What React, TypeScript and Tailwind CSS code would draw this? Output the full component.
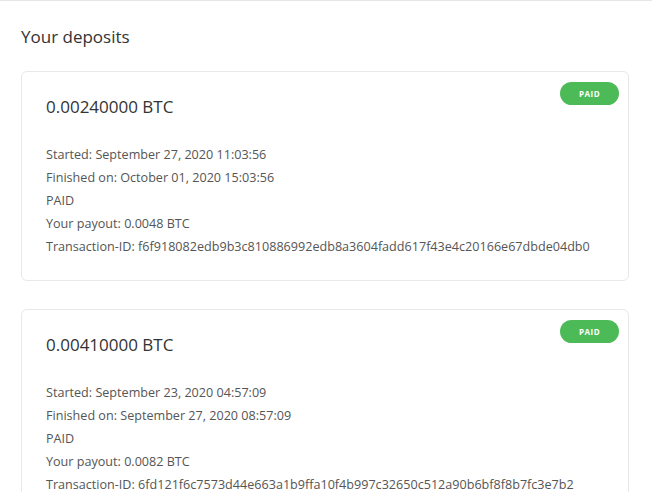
import React from "react";

const deposits = [
  {
    amount: "0.00240000 BTC",
    started: "September 27, 2020 11:03:56",
    finished: "October 01, 2020 15:03:56",
    payout: "0.0048 BTC",
    tx: "f6f918082edb9b3c810886992edb8a3604fadd617f43e4c20166e67dbde04db0",
  },
  {
    amount: "0.00410000 BTC",
    started: "September 23, 2020 04:57:09",
    finished: "September 27, 2020 08:57:09",
    payout: "0.0082 BTC",
    tx: "6fd121f6c7573d44e663a1b9ffa10f4b997c32650c512a90b6bf8f8b7fc3e7b2",
  },
];

export default function App() {
  return (
    <div
      className="w-[652px] h-[492px] overflow-hidden bg-white border-t border-[#e6e6e6]"
      style={{ fontFamily: '"Open Sans", sans-serif' }}
    >
      <div className="pl-[21px] pr-[23px] pt-[24px]">
        <h2 className="text-[17px] leading-[24px] text-[#333]">Your deposits</h2>
        <div className="mt-[22px] flex flex-col gap-[28px]">
          {deposits.map((d, i) => (
            <div
              key={i}
              className="relative rounded-[6px] border border-[#e8e8e8] pl-[24px] pt-[23px] pb-[22px]"
            >
              <span className="absolute top-[10px] right-[9px] w-[59px] h-[23px] rounded-full bg-[#4cbb57] text-white text-[8px] font-bold tracking-[0.5px] flex items-center justify-center">
                PAID
              </span>
              <div className="text-[17px] leading-[24px] text-[#333]">{d.amount}</div>
              <div className="mt-[24px] text-[12.6px] leading-[23px] text-[#555]">
                <div>Started: {d.started}</div>
                <div>Finished on: {d.finished}</div>
                <div>PAID</div>
                <div>Your payout: {d.payout}</div>
                <div>Transaction-ID: {d.tx}</div>
              </div>
            </div>
          ))}
        </div>
      </div>
    </div>
  );
}
